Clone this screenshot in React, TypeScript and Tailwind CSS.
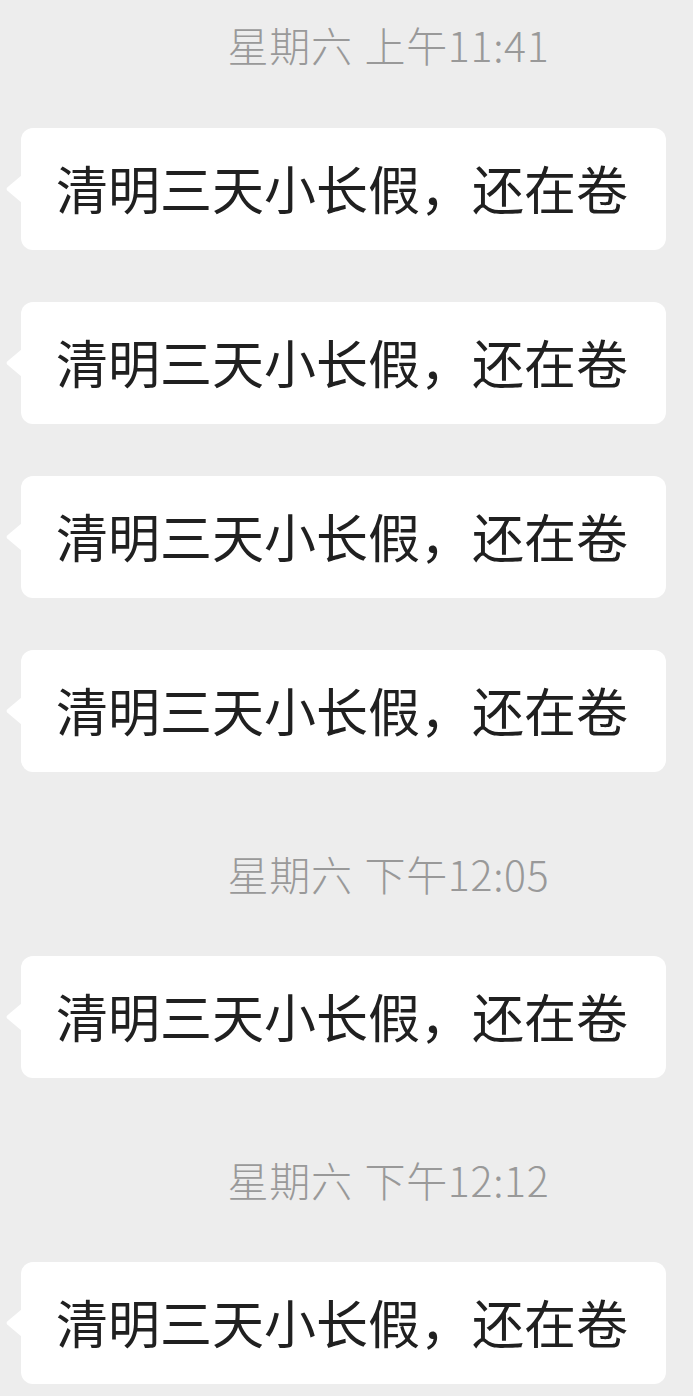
import React from "react";

const font = { fontFamily: '"Noto Sans CJK SC", "Noto Sans", sans-serif' };

function Stamp({ text, className = "" }: { text: string; className?: string }) {
  return (
    <div className={`flex justify-center pl-[84px] ${className}`}>
      <span className="text-[41px] leading-[48px] font-light tracking-[0.7px] [word-spacing:2px] text-[#999999]">
        {text}
      </span>
    </div>
  );
}

function Bubble({ className = "" }: { className?: string }) {
  return (
    <div className={`relative ml-[21px] ${className}`}>
      <svg
        className="absolute left-[-16px] top-[45px]"
        width="18"
        height="32"
        viewBox="0 0 18 32"
      >
        <path d="M17 2 L2.2 14.6 Q0.8 16 2.2 17.4 L17 30 Z" fill="#ffffff" />
      </svg>
      <div className="flex h-[122px] w-[645px] items-center justify-center rounded-[12px] bg-white pb-[3px]">
        <span className="text-[52px] leading-none text-[#202020] pr-[3px]">
          清明三天小长假，还在卷
        </span>
      </div>
    </div>
  );
}

export default function App() {
  return (
    <div className="h-[1396px] w-[693px] overflow-hidden bg-[#ededed]" style={font}>
      <div className="flex flex-col pt-[20px]">
        <Stamp text="星期六 上午11:41" />
        <Bubble className="mt-[60px]" />
        <Bubble className="mt-[52px]" />
        <Bubble className="mt-[52px]" />
        <Bubble className="mt-[52px]" />
        <Stamp text="星期六 下午12:05" className="mt-[77px]" />
        <Bubble className="mt-[59px]" />
        <Stamp text="星期六 下午12:12" className="mt-[77px]" />
        <Bubble className="mt-[59px]" />
      </div>
    </div>
  );
}
